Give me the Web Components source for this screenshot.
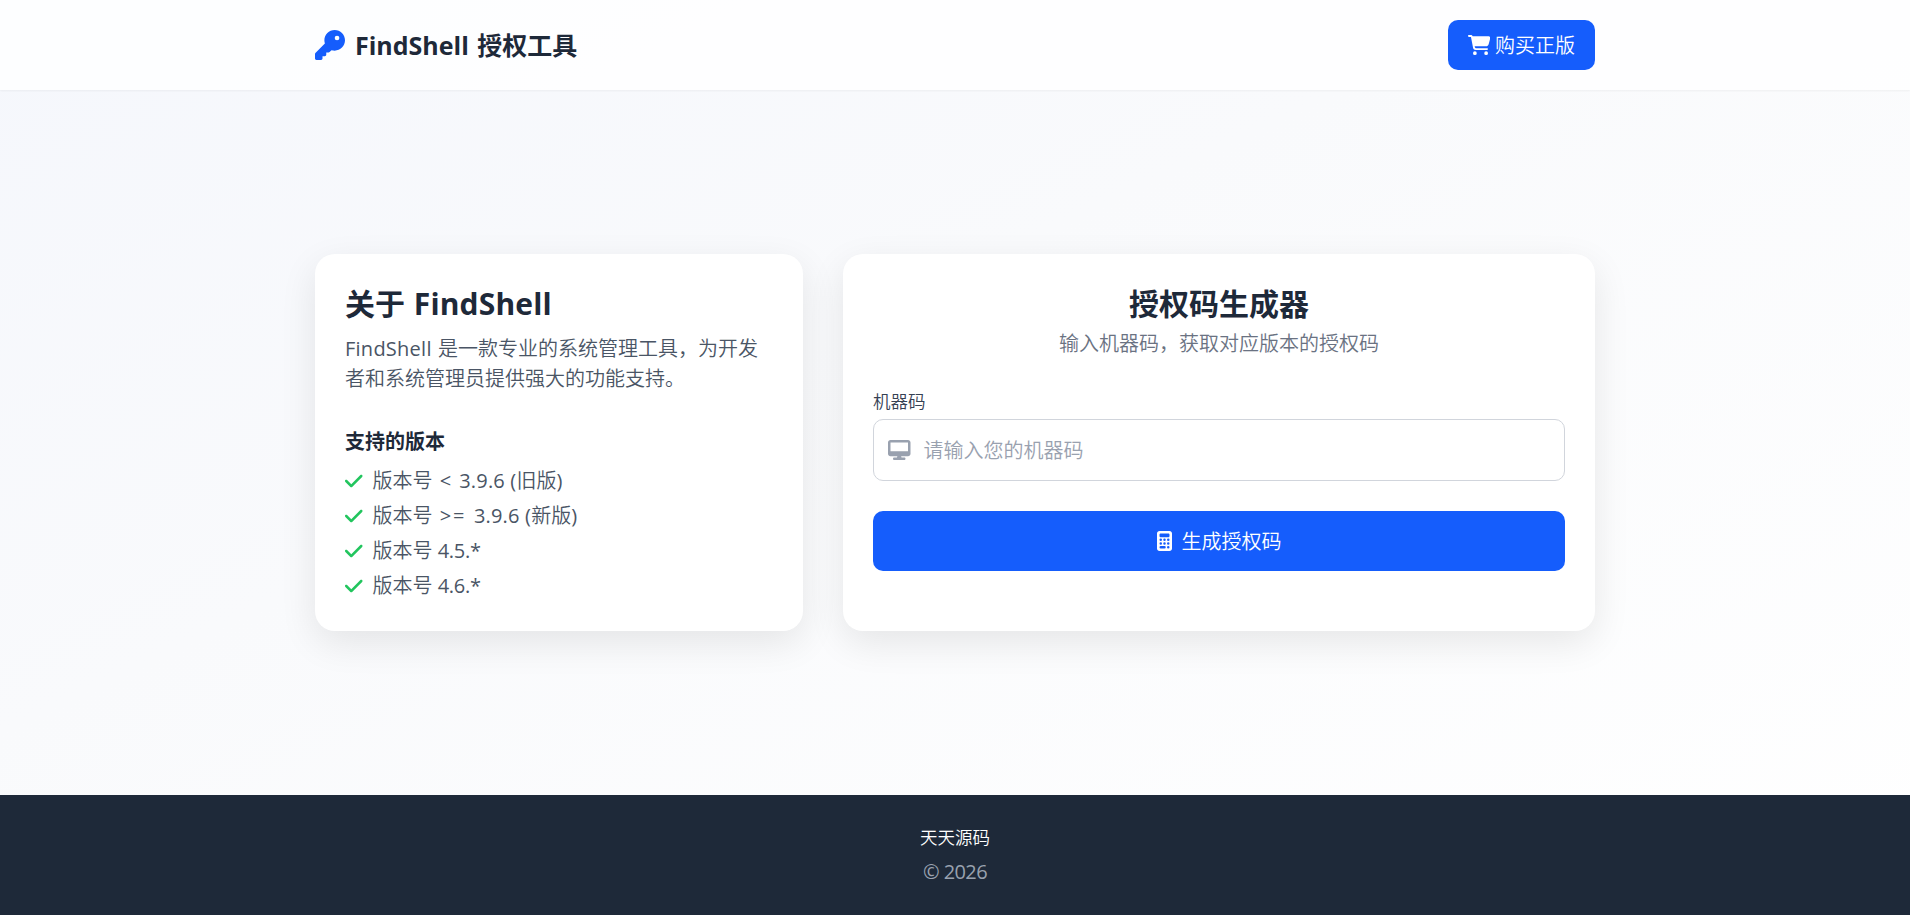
<!DOCTYPE html>
<html lang="zh-CN">
<head>
<meta charset="utf-8">
<title>FindShell 授权工具</title>
<style>
html,body{margin:0;height:100%}
body{font-family:"Open Sans","Noto Sans CJK SC",sans-serif;font-size:20px;line-height:30px;font-weight:350;color:#1e2939}
</style>
</head>
<body>
<auth-page></auth-page>
<script>
const ICONS={
key:['0 0 512 512','M336 352c97.2 0 176-78.8 176-176S433.2 0 336 0S160 78.8 160 176c0 18.7 2.9 36.8 8.3 53.7L7 391c-4.5 4.5-7 10.6-7 17v80c0 13.3 10.7 24 24 24h80c13.3 0 24-10.7 24-24V448h40c13.3 0 24-10.7 24-24V384h40c6.4 0 12.5-2.5 17-7l33.3-33.3c16.9 5.4 35 8.3 53.7 8.3zM376 96a40 40 0 1 1 0 80 40 40 0 1 1 0-80z'],
cart:['0 0 576 512','M0 24C0 10.7 10.7 0 24 0H69.5c22 0 41.5 12.8 50.6 32h411c26.3 0 45.5 25 38.6 50.4l-41 152.3c-8.5 31.4-37 53.3-69.5 53.3H170.7l5.4 28.5c2.2 11.3 12.1 19.5 23.6 19.5H488c13.3 0 24 10.7 24 24s-10.7 24-24 24H199.7c-34.6 0-64.3-24.6-70.7-58.5L77.4 54.5c-.7-3.8-4-6.5-7.9-6.5H24C10.7 48 0 37.3 0 24zM128 464a48 48 0 1 1 96 0 48 48 0 1 1 -96 0zm336-48a48 48 0 1 1 0 96 48 48 0 1 1 0-96z'],
check:['0 0 448 512','M438.6 105.4c12.5 12.5 12.5 32.8 0 45.3l-256 256c-12.5 12.5-32.8 12.5-45.3 0l-128-128c-12.5-12.5-12.5-32.8 0-45.3s32.8-12.5 45.3 0L160 338.7 393.4 105.4c12.5-12.5 32.8-12.5 45.3 0z'],
desktop:['0 0 576 512','M64 0C28.7 0 0 28.7 0 64V352c0 35.3 28.7 64 64 64H240l-10.7 32H160c-17.7 0-32 14.3-32 32s14.3 32 32 32H416c17.7 0 32-14.3 32-32s-14.3-32-32-32H346.7L336 416H512c35.3 0 64-28.7 64-64V64c0-35.3-28.7-64-64-64H64zM512 64V288H64V64H512z'],
calculator:['0 0 384 512','M64 0C28.7 0 0 28.7 0 64V448c0 35.3 28.7 64 64 64H320c35.3 0 64-28.7 64-64V64c0-35.3-28.7-64-64-64H64zM96 64H288c17.7 0 32 14.3 32 32v32c0 17.7-14.3 32-32 32H96c-17.7 0-32-14.3-32-32V96c0-17.7 14.3-32 32-32zM64 224a32 32 0 1 1 64 0 32 32 0 1 1-64 0zM160 224a32 32 0 1 1 64 0 32 32 0 1 1-64 0zM256 224a32 32 0 1 1 64 0 32 32 0 1 1-64 0zM64 320a32 32 0 1 1 64 0 32 32 0 1 1-64 0zM160 320a32 32 0 1 1 64 0 32 32 0 1 1-64 0zM256 320a32 32 0 1 1 64 0 32 32 0 1 1-64 0zM96 384H192a32 32 0 1 1 0 64H96a32 32 0 1 1 0-64zM256 416a32 32 0 1 1 64 0 32 32 0 1 1-64 0z']
};
const define=(name,html)=>customElements.define(name,class extends HTMLElement{
  constructor(){super();const t=document.createElement('template');t.innerHTML=html;this.attachShadow({mode:'open'}).append(t.content.cloneNode(true));}
});
customElements.define('fa-icon',class extends HTMLElement{
  connectedCallback(){
    if(this.shadowRoot)return;
    const [box,path]=ICONS[this.getAttribute('name')];
    this.attachShadow({mode:'open'}).innerHTML=`<style>:host{display:inline-flex;flex:none}svg{height:1em;width:auto;display:block;fill:currentColor}</style><svg viewBox="${box}"><path fill-rule="evenodd" d="${path}"/></svg>`;
  }
});
define('site-header',`<style>
:host{display:block;height:90px;background:rgba(255,255,255,.8);box-shadow:0 1px 2px rgba(0,0,0,.05)}
.in{width:1280px;height:90px;margin:0 auto;display:flex;align-items:center;justify-content:space-between}
.brand{display:flex;align-items:center;gap:10px;font-size:25px;font-weight:700;line-height:35px}
.brand fa-icon{font-size:30px;color:#155dfc}
.brand span{word-spacing:2px}
a{display:flex;align-items:center;gap:5px;height:50px;box-sizing:border-box;padding:0 20px;background:#155dfc;color:#fff;border-radius:10px}
a span{padding-top:1px}
</style><div class="in"><div class="brand"><fa-icon name="key"></fa-icon><span>FindShell 授权工具</span></div><a><fa-icon name="cart"></fa-icon><span>购买正版</span></a></div>`);
define('panel-card',`<style>
:host{display:block;background:#fff;border-radius:20px;padding:30px;box-sizing:border-box;box-shadow:0 12px 37.5px rgba(0,0,0,.09)}
</style><slot></slot>`);
define('version-item',`<style>
:host{display:flex;align-items:center;gap:10px;height:30px;color:#4a5565}
fa-icon{color:#22c55e}
</style><fa-icon name="check"></fa-icon><span><slot></slot></span>`);
define('about-panel',`<style>
:host{display:block}
h2{margin:0 0 10px;font-size:30px;line-height:40px;font-weight:700;word-spacing:1px}
h2 i{font-style:normal;letter-spacing:.15px}
p{margin:0 0 30px;padding-right:10px;color:#4a5565}
p i{font-style:normal;font-weight:400;letter-spacing:.25px;margin-right:1px}
h3{margin:0 0 7px;font-size:20px;line-height:35px;font-weight:700}
.list{display:grid;gap:5px}
b{font-weight:400}
.op{letter-spacing:.8px;margin:0 2px}
.op.wide{letter-spacing:1.8px;margin-right:2.5px}
.num{letter-spacing:.2px}
.tight{letter-spacing:-.3px}
</style><h2>关于 <i>FindShell</i></h2><p><i>FindShell</i> 是一款专业的系统管理工具，为开发者和系统管理员提供强大的功能支持。</p>
<h3>支持的版本</h3><div class="list"><version-item>版本号 <b class="op">&lt;</b> <b class="num">3.9.6 (</b>旧版<b>)</b></version-item><version-item>版本号 <b class="op wide">&gt;=</b> <b class="num">3.9.6 (</b>新版<b>)</b></version-item><version-item>版本号 <b class="tight">4.5.*</b></version-item><version-item>版本号 <b class="tight">4.6.*</b></version-item></div>`);
define('code-form',`<style>
:host{display:block}
h2{margin:0 0 5px;font-size:30px;line-height:40px;font-weight:700;text-align:center}
p{margin:0 0 30px;text-align:center;color:#6a7282}
label{display:block;font-size:17.5px;line-height:25px;margin-bottom:5px;color:#364153}
.field{display:flex;align-items:center;gap:13px;height:62px;box-sizing:border-box;padding:0 14px;border:1px solid #d1d5dc;border-radius:10px;color:#99a1af;margin-bottom:30px}
.field span{padding-top:1px}
button{display:flex;align-items:center;justify-content:center;gap:10px;width:100%;height:60px;border:0;border-radius:10px;background:#155dfc;color:#fff;font:inherit}
button span{padding-top:1px}
</style><h2>授权码生成器</h2><p>输入机器码，获取对应版本的授权码</p><label>机器码</label><div class="field"><fa-icon name="desktop"></fa-icon><span>请输入您的机器码</span></div><button><fa-icon name="calculator"></fa-icon><span>生成授权码</span></button>`);
define('site-footer',`<style>
:host{display:flex;flex-direction:column;align-items:center;height:120px;box-sizing:border-box;padding-top:30px;background:#1e2939;color:#99a1af}
a{font-size:17.5px;line-height:25px;color:#fff;margin-bottom:7px}
span{font-weight:400;letter-spacing:-.6px}
</style><a>天天源码</a><span>© 2026</span>`);
define('auth-page',`<style>
:host{display:flex;flex-direction:column;height:915px;background:linear-gradient(to bottom right,#f5f7fc 0%,#f9fafc 40%,#fff 100%)}
main{flex:1;display:flex;align-items:center;justify-content:center}
.grid{display:grid;grid-template-columns:488px 752px;gap:40px}
panel-card{height:377px}
</style><site-header></site-header><main><div class="grid"><panel-card><about-panel></about-panel></panel-card><panel-card><code-form></code-form></panel-card></div></main><site-footer></site-footer>`);
</script>
</body>
</html>
